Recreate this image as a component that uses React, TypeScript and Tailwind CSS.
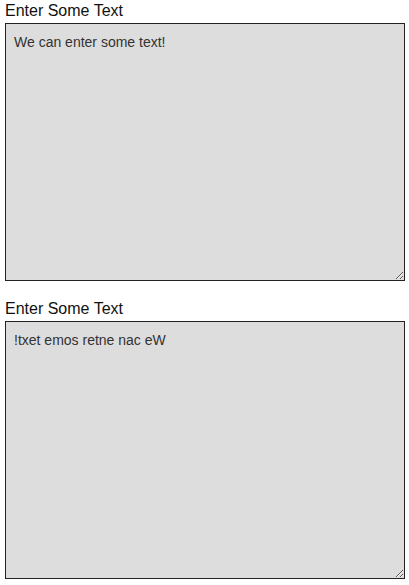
import { useState } from 'react';

export default function App() {
  const [text, setText] = useState('We can enter some text!');
  const reversed = text.split('').reverse().join('');

  return (
    <div className="px-[5px] pt-[1px] font-['Liberation_Sans',Arial,sans-serif] text-[#111]">
      {/* Input */}
      <div className="flex flex-col">
        <label className="text-[16px] leading-[20px] mb-[2px]">Enter Some Text</label>
        <textarea
          value={text}
          onChange={(e) => setText(e.target.value)}
          className="block w-[400px] h-[258px] bg-[#dddddd] border border-[#222] px-[8px] py-[9px] text-[14px] leading-[18px] text-[#333] outline-none"
        />
      </div>

      {/* Reversed output */}
      <div className="flex flex-col mt-[18px]">
        <label className="text-[16px] leading-[20px] mb-[2px]">Enter Some Text</label>
        <textarea
          value={reversed}
          readOnly
          className="block w-[400px] h-[258px] bg-[#dddddd] border border-[#222] px-[8px] py-[9px] text-[14px] leading-[18px] text-[#333] outline-none"
        />
      </div>
    </div>
  );
}
